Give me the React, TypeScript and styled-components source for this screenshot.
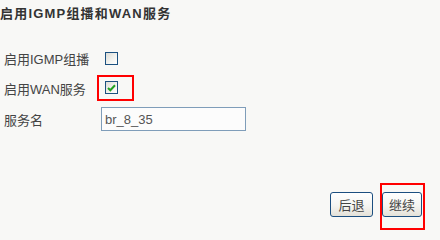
import { createGlobalStyle, styled } from "styled-components";

const GlobalStyle = createGlobalStyle`
  body {
    margin: 0;
    background: #f8f8f6;
    font-family: "Liberation Sans", "Noto Sans CJK SC", sans-serif;
    color: #444;
  }
`;

const Page = styled.div`
  box-sizing: border-box;
  width: 440px;
  height: 232px;
  padding: 5px 0 2px;
  display: flex;
  flex-direction: column;
  overflow: hidden;
`;

const Title = styled.h3`
  margin: 0;
  height: 17px;
  font-size: 13px;
  line-height: 17px;
  font-weight: bold;
  letter-spacing: 1.2px;
  color: #333;
`;

const Form = styled.div`
  margin-top: 21px;
  display: grid;
  grid-template-columns: 101px 1fr;
`;

const Label = styled.div<{ $tall?: boolean }>`
  display: flex;
  align-items: center;
  height: ${(p) => (p.$tall ? "32px" : "30px")};
  padding-left: 4px;
  font-size: 13px;
`;

const Cell = styled.div<{ $tall?: boolean }>`
  display: flex;
  align-items: center;
  height: ${(p) => (p.$tall ? "32px" : "30px")};
`;

const Box = styled.span<{ $marked?: boolean }>`
  display: inline-flex;
  align-items: center;
  justify-content: center;
  box-sizing: border-box;
  width: 13px;
  height: 13px;
  margin: ${(p) => (p.$marked ? "4px 14px 5px 6px" : "0 0 0 4px")};
  border: 1px solid #1c5180;
  background: linear-gradient(135deg, #dcdcd6 0%, #f4f4f0 60%, #ffffff 100%);
`;

const Highlight = styled.span<{ $pad: string; $shift?: number }>`
  display: inline-flex;
  align-items: flex-start;
  border: 2px solid #f00;
  padding: ${(p) => p.$pad};
  margin-left: ${(p) => p.$shift ?? 0}px;
`;

const TextInput = styled.input`
  box-sizing: border-box;
  width: 145px;
  height: 24px;
  margin: 0;
  padding: 0 3px;
  border: 1px solid #7f9db9;
  background: #fcfcfc;
  font-family: "Liberation Sans", "Noto Sans CJK SC", sans-serif;
  font-size: 13px;
  color: #555;
  outline: none;
`;

const Footer = styled.div`
  margin-top: auto;
  padding-right: 15px;
  display: flex;
  justify-content: flex-end;
  align-items: flex-start;
  gap: 7px;
`;

const Button = styled.button<{ $inset?: boolean }>`
  box-sizing: border-box;
  width: ${(p) => (p.$inset ? "40px" : "43px")};
  height: 25px;
  margin: ${(p) => (p.$inset ? "0" : "9px 0 0")};
  padding: 0;
  border: 1px solid #1c4f80;
  border-radius: 3px;
  background: linear-gradient(#ffffff 0%, #f5f5f1 55%, #e4e1d8 100%);
  font-family: "Noto Sans CJK SC", sans-serif;
  font-size: 13px;
  line-height: 23px;
  color: #444;
`;

const Checkbox = ({ checked, marked }: { checked?: boolean; marked?: boolean }) => (
  <Box role="checkbox" aria-checked={!!checked} $marked={marked}>
    {checked && (
      <svg width="9" height="8" viewBox="0 0 9 8">
        <path d="M1 4 L3.3 6.3 L8 1.2" fill="none" stroke="#21a121" strokeWidth="2" />
      </svg>
    )}
  </Box>
);

export default function App() {
  return (
    <Page>
      <GlobalStyle />
      <Title>启用IGMP组播和WAN服务</Title>
      <Form>
        <Label>启用IGMP组播</Label>
        <Cell>
          <Checkbox />
        </Cell>
        <Label>启用WAN服务</Label>
        <Cell>
          <Highlight $pad="0" $shift={-4}>
            <Checkbox checked marked />
          </Highlight>
        </Cell>
        <Label $tall>服务名</Label>
        <Cell $tall>
          <TextInput defaultValue="br_8_35" />
        </Cell>
      </Form>
      <Footer>
        <Button>后退</Button>
        <Highlight $pad="7px 1px 11px 0">
          <Button $inset>继续</Button>
        </Highlight>
      </Footer>
    </Page>
  );
}
